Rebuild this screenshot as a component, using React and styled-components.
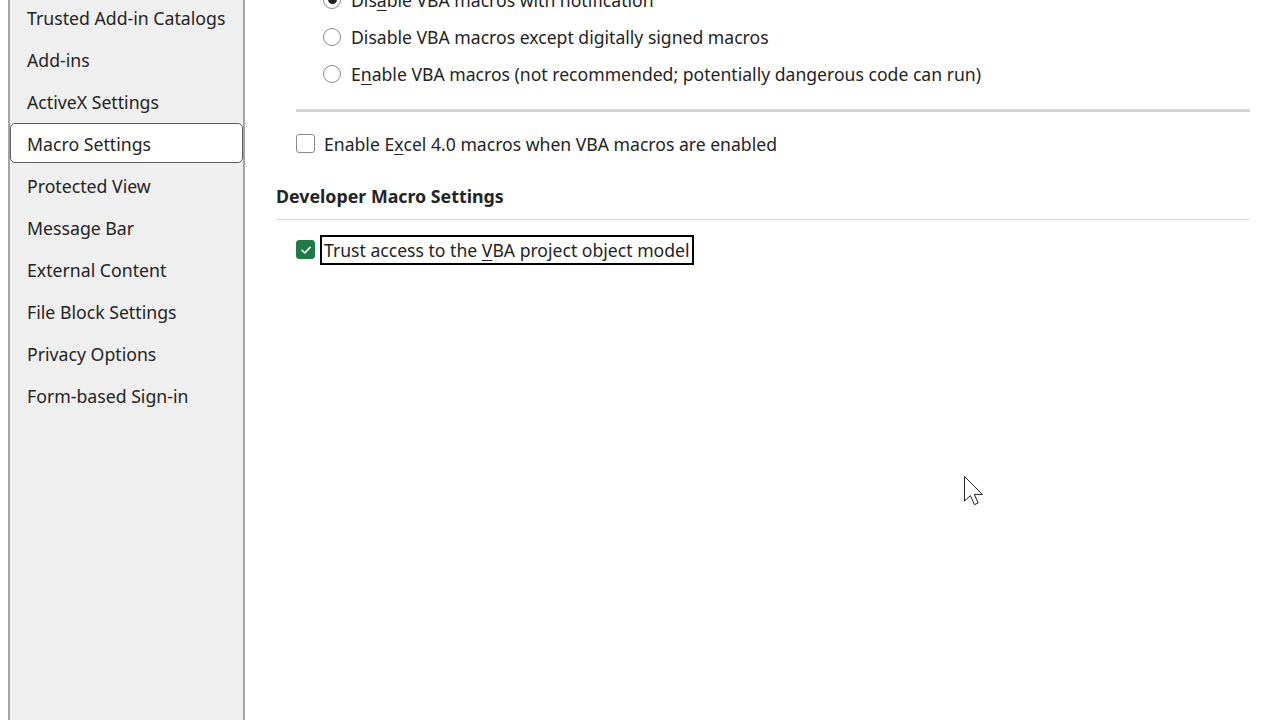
import styled, { createGlobalStyle } from "styled-components";

const GlobalStyle = createGlobalStyle`
  html, body {
    margin: 0;
    padding: 0;
    background: #ffffff;
    overflow: hidden;
  }
  body {
    font-family: "Noto Sans", "Open Sans", sans-serif;
    color: #1f1f1f;
  }
`;

const Page = styled.div`
  position: relative;
  display: flex;
  height: 720px;
  overflow: hidden;
`;

const Sidebar = styled.nav`
  flex: 0 0 237px;
  box-sizing: border-box;
  margin-left: 8px;
  margin-top: -24px;
  height: 760px;
  background: #efefef;
  border-left: 2px solid #a3a3a3;
  border-right: 2px solid #a3a3a3;
  padding-top: 21px;
`;

const NavItem = styled.div`
  box-sizing: border-box;
  height: 40px;
  margin-bottom: 2px;
  display: flex;
  align-items: center;
  padding-left: 16px;
  padding-top: 1px;
  font-size: 17.7px;
  color: #242424;
  border-radius: 5px;
  border: 1px solid ${(p) => (p.$active ? "#5f5f5f" : "transparent")};
  background: ${(p) => (p.$active ? "#ffffff" : "transparent")};
`;

const Main = styled.main`
  flex: 1;
  padding: 0 30px 0 31px;
  margin-top: -19px;
`;

const OptionRow = styled.label`
  display: flex;
  align-items: center;
  height: 37px;
  padding-left: ${(p) => p.$indent || 0}px;
  font-size: 17.6px;
  color: #242424;
`;

const Radio = styled.span`
  width: 18px;
  height: 18px;
  border-radius: 50%;
  border: 1px solid #8a8a8a;
  margin-right: 10px;
  display: flex;
  align-items: center;
  justify-content: center;
  box-sizing: border-box;
  background: #fff;

  &::after {
    content: "";
    display: ${(p) => (p.$checked ? "block" : "none")};
    width: 9px;
    height: 9px;
    border-radius: 50%;
    background: #1f1f1f;
  }
`;

const Box = styled.span`
  width: 19px;
  height: 19px;
  box-sizing: border-box;
  border-radius: 3px;
  margin-right: 9px;
  border: 1px solid ${(p) => (p.$checked ? "#1e7b46" : "#8a8a8a")};
  background: ${(p) => (p.$checked ? "#1e7b46" : "#ffffff")};
  display: flex;
  align-items: center;
  justify-content: center;
`;

const Divider = styled.div`
  height: ${(p) => p.$thick || 1}px;
  background: ${(p) => (p.$thick ? "#d4d4d4" : "#dcdcdc")};
  margin-left: ${(p) => p.$indent || 0}px;
`;

const Spacer = styled.div`
  height: ${(p) => p.$h}px;
`;

const Heading = styled.h3`
  margin: 0 0 2px;
  height: 42px;
  display: flex;
  align-items: center;
  font-size: 17.8px;
  font-weight: 700;
  color: #242424;
`;

const Focus = styled.span`
  box-sizing: border-box;
  border: 2px solid #000;
  padding: 0 2px;
  height: 30px;
  display: flex;
  align-items: center;
  margin-left: -4px;
  white-space: pre;
`;

const U = styled.span`
  text-decoration: underline;
  text-underline-offset: 3px;
  text-decoration-thickness: 1px;
`;

const Cursor = styled.svg`
  position: absolute;
  left: 963px;
  top: 475px;
`;

const navItems = [
  "Trusted Add-in Catalogs",
  "Add-ins",
  "ActiveX Settings",
  "Macro Settings",
  "Protected View",
  "Message Bar",
  "External Content",
  "File Block Settings",
  "Privacy Options",
  "Form-based Sign-in",
];

function Check() {
  return (
    <svg width="12" height="12" viewBox="0 0 12 12">
      <path d="M2 6.2 L4.8 9 L10 3.4" fill="none" stroke="#fff" strokeWidth="1.6" strokeLinecap="round" strokeLinejoin="round" />
    </svg>
  );
}

export default function App() {
  return (
    <>
      <GlobalStyle />
      <Page>
        <Sidebar>
          {navItems.map((item) => (
            <NavItem key={item} $active={item === "Macro Settings"}>
              {item}
            </NavItem>
          ))}
        </Sidebar>
        <Main>
          <OptionRow $indent={47}>
            <Radio $checked />
            Dis<U>a</U>ble VBA macros with notification
          </OptionRow>
          <OptionRow $indent={47}>
            <Radio />
            Disable VBA macros except digitally signed macros
          </OptionRow>
          <OptionRow $indent={47}>
            <Radio />
            E<U>n</U>able VBA macros (not recommended; potentially dangerous code can run)
          </OptionRow>
          <Spacer $h={17} />
          <Divider $thick={3} $indent={20} />
          <Spacer $h={13} />
          <OptionRow $indent={20}>
            <Box />
            Enable E<U>x</U>cel 4.0 macros when VBA macros are enabled
          </OptionRow>
          <Spacer $h={13} />
          <Heading>Developer Macro Settings</Heading>
          <Divider />
          <Spacer $h={11} />
          <OptionRow $indent={20}>
            <Box $checked>
              <Check />
            </Box>
            <Focus>
              <span>
                Trust access to the <U>V</U>BA project object model
              </span>
            </Focus>
          </OptionRow>
        </Main>
        <Cursor width="24" height="34" viewBox="0 0 24 34">
          <path d="M1.5 1.5 L1.5 26 L7.4 20.6 L11.4 29.6 L15.2 28 L11.3 19.4 L19.5 19.4 Z" fill="#fff" stroke="#222" strokeWidth="1" strokeLinejoin="miter" />
        </Cursor>
      </Page>
    </>
  );
}
